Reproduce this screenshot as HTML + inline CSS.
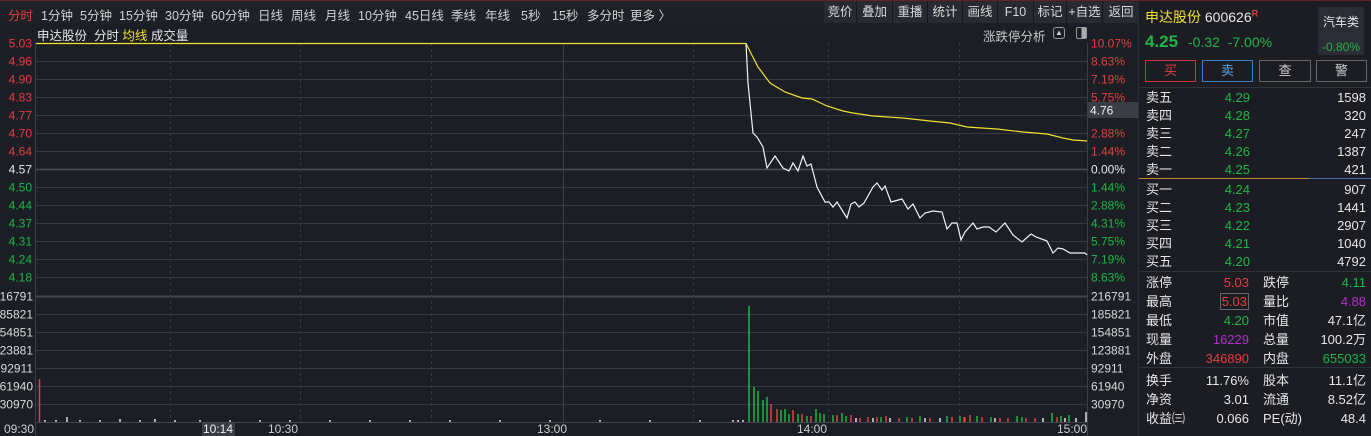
<!DOCTYPE html>
<html><head><meta charset="utf-8"><style>
*{margin:0;padding:0;box-sizing:border-box}
body{width:1371px;height:436px;overflow:hidden;background:#1c1e25;font-family:"Liberation Sans","Noto Sans CJK SC",sans-serif;font-size:12px;color:#d8d8d8;position:relative}
.a{position:absolute;white-space:nowrap}
.r{color:#e0403f}.g{color:#1fb545}.w{color:#e6e6e6}.y{color:#f0e030}.p{color:#b030c8}
</style></head><body>
<div class="a" style="left:0;top:0;width:1371px;height:1px;background:#6a1f22"></div>
<div class="a" style="left:0;top:1px;width:1140px;height:22px;background:#1f2128"></div>
<div class="a" style="top:5px;left:0;font-size:12.5px;color:#d0d0d0">
<span class="a r" style="left:8px">分时</span><span class="a" style="left:41px">1分钟</span><span class="a" style="left:80px">5分钟</span><span class="a" style="left:119px">15分钟</span><span class="a" style="left:165px">30分钟</span><span class="a" style="left:211px">60分钟</span><span class="a" style="left:258px">日线</span><span class="a" style="left:291px">周线</span><span class="a" style="left:325px">月线</span><span class="a" style="left:358px">10分钟</span><span class="a" style="left:405px">45日线</span><span class="a" style="left:451px">季线</span><span class="a" style="left:485px">年线</span><span class="a" style="left:521px">5秒</span><span class="a" style="left:552px">15秒</span><span class="a" style="left:587px">多分时</span><span class="a" style="left:630px">更多 〉</span>
</div>
<div class="a" style="left:824px;top:1px;height:22px;display:flex;font-size:12.5px;color:#d8d8d8">
<div style="width:33px;text-align:center;line-height:22px;background:#272a32;border-right:1px solid #15171c">竞价</div><div style="width:36px;text-align:center;line-height:22px;background:#272a32;border-right:1px solid #15171c">叠加</div><div style="width:35px;text-align:center;line-height:22px;background:#272a32;border-right:1px solid #15171c">重播</div><div style="width:35px;text-align:center;line-height:22px;background:#272a32;border-right:1px solid #15171c">统计</div><div style="width:35px;text-align:center;line-height:22px;background:#272a32;border-right:1px solid #15171c">画线</div><div style="width:36px;text-align:center;line-height:22px;background:#272a32;border-right:1px solid #15171c">F10</div><div style="width:33px;text-align:center;line-height:22px;background:#272a32;border-right:1px solid #15171c">标记</div><div style="width:36px;text-align:center;line-height:22px;background:#272a32;border-right:1px solid #15171c">+自选</div><div style="width:36px;text-align:center;line-height:22px;background:#272a32">返回</div>
</div>
<div class="a w" style="left:37px;top:25px;font-size:12.5px">申达股份 &nbsp;分时 <span class="y">均线</span> 成交量</div>
<div class="a" style="left:983px;top:26px;font-size:12.5px;color:#c8c8c8">涨跌停分析</div>
<div class="a" style="left:1053px;top:27px;width:12px;height:12px;border:1px solid #999;border-radius:3px;font-size:8px;text-align:center;line-height:10px;color:#ccc">▲</div>
<div class="a" style="left:1076px;top:27px;width:11px;height:12px;border:1px solid #999;border-radius:2px;background:linear-gradient(90deg,transparent 50%,#aaa 50%)"></div>

<svg class="a" style="left:0;top:0" width="1140" height="436">
<g stroke="#363a44" stroke-width="1">
<line x1="36" x2="1087" y1="61.5" y2="61.5"/><line x1="36" x2="1087" y1="79.5" y2="79.5"/><line x1="36" x2="1087" y1="97.5" y2="97.5"/><line x1="36" x2="1087" y1="115.5" y2="115.5"/><line x1="36" x2="1087" y1="133.5" y2="133.5"/><line x1="36" x2="1087" y1="151.5" y2="151.5"/><line x1="36" x2="1087" y1="187.5" y2="187.5"/><line x1="36" x2="1087" y1="205.5" y2="205.5"/><line x1="36" x2="1087" y1="223.5" y2="223.5"/><line x1="36" x2="1087" y1="241.5" y2="241.5"/><line x1="36" x2="1087" y1="259.5" y2="259.5"/><line x1="36" x2="1087" y1="277.5" y2="277.5"/>
<line x1="36" x2="1087" y1="314.5" y2="314.5"/><line x1="36" x2="1087" y1="332.5" y2="332.5"/><line x1="36" x2="1087" y1="350.5" y2="350.5"/><line x1="36" x2="1087" y1="368.5" y2="368.5"/><line x1="36" x2="1087" y1="386.5" y2="386.5"/><line x1="36" x2="1087" y1="404.5" y2="404.5"/>
</g>
<line x1="36" x2="1087" y1="169.5" y2="169.5" stroke="#4a4e5a" stroke-width="1.5"/>
<line x1="36" x2="1087" y1="296.5" y2="296.5" stroke="#424652" stroke-width="2"/>
<line x1="36" x2="1087" y1="422.5" y2="422.5" stroke="#424652"/>
<g stroke="#363a44" stroke-dasharray="3,3"><line x1="170.5" x2="170.5" y1="43" y2="422"/><line x1="300.5" x2="300.5" y1="43" y2="422"/><line x1="431.5" x2="431.5" y1="43" y2="422"/><line x1="693.5" x2="693.5" y1="43" y2="422"/><line x1="828.5" x2="828.5" y1="43" y2="422"/><line x1="959.5" x2="959.5" y1="43" y2="422"/></g>
<line x1="563.5" x2="563.5" y1="43" y2="422" stroke="#3a3e48"/>
<line x1="35.5" x2="35.5" y1="43" y2="436" stroke="#3a3e48"/>
<line x1="1087.5" x2="1087.5" y1="43" y2="436" stroke="#3a3e48"/>
<line x1="1138.5" x2="1138.5" y1="23" y2="436" stroke="#2c2f37"/>
<polyline fill="none" stroke="#f0e030" stroke-width="1.2" points="36,43.5 746,43.5 758,67 770,83 785,92 802,98 812,99 827,106 843,111 853,113 873,116 903,118 930,121 950,123 967,127 997,129 1023,132 1047,134 1063,138 1073,140 1087,141"/>
<polyline fill="none" stroke="#f2f2f2" stroke-width="1.2" points="746,43.5 748,83 753,133 757,137 763,147 767,168 775,156 783,168 789,171 793,163 798,171 803,156 807,166 811,164 817,187 825,202 829,202 833,207 837,202 847,218 851,204 855,202 859,207 864,203 873,187 877,183 882,190 885,186 891,202 902,199 908,209 913,204 920,218 925,213 933,211 942,212 947,229 952,223 957,223 961,240 965,232 973,223 977,229 983,227 989,227 996,232 1005,223 1013,235 1022,242 1031,234 1036,237 1047,241 1053,253 1058,248 1063,249 1070,253 1085,253 1087,255"/>
<g stroke-width="1.5">
<line x1="39.5" x2="39.5" y1="379" y2="422" stroke="#e0403f"/>
<g stroke="#ddd"><line x1="45" x2="45" y1="420" y2="422"/><line x1="56" x2="56" y1="420" y2="422"/><line x1="67" x2="67" y1="417" y2="422"/><line x1="80" x2="80" y1="420" y2="422"/><line x1="100" x2="100" y1="420" y2="422"/><line x1="120" x2="120" y1="419" y2="422"/><line x1="140" x2="140" y1="420" y2="422"/><line x1="155" x2="155" y1="419" y2="422"/><line x1="175" x2="175" y1="420" y2="422"/><line x1="200" x2="200" y1="420" y2="422"/><line x1="230" x2="230" y1="420" y2="422"/><line x1="260" x2="260" y1="420" y2="422"/><line x1="290" x2="290" y1="420" y2="422"/><line x1="330" x2="330" y1="420" y2="422"/><line x1="370" x2="370" y1="420" y2="422"/><line x1="410" x2="410" y1="420" y2="422"/><line x1="450" x2="450" y1="420" y2="422"/><line x1="500" x2="500" y1="420" y2="422"/><line x1="550" x2="550" y1="420" y2="422"/><line x1="600" x2="600" y1="420" y2="422"/><line x1="650" x2="650" y1="420" y2="422"/><line x1="700" x2="700" y1="420" y2="422"/><line x1="733" x2="733" y1="420" y2="422"/><line x1="738" x2="738" y1="420" y2="422"/><line x1="743" x2="743" y1="420" y2="422"/></g>
<g stroke="#1fb545"><line x1="749" x2="749" y1="306" y2="422"/><line x1="754" x2="754" y1="387" y2="422"/><line x1="758" x2="758" y1="391" y2="422"/><line x1="763" x2="763" y1="400" y2="422"/><line x1="767" x2="767" y1="397" y2="422"/><line x1="781" x2="781" y1="410" y2="422"/><line x1="785" x2="785" y1="409" y2="422"/><line x1="789" x2="789" y1="414" y2="422"/><line x1="798" x2="798" y1="414" y2="422"/><line x1="807" x2="807" y1="416" y2="422"/><line x1="816" x2="816" y1="409" y2="422"/><line x1="820" x2="820" y1="413" y2="422"/><line x1="824" x2="824" y1="414" y2="422"/><line x1="833" x2="833" y1="415" y2="422"/><line x1="842" x2="842" y1="413" y2="422"/><line x1="846" x2="846" y1="416" y2="422"/><line x1="881" x2="881" y1="417" y2="422"/><line x1="907" x2="907" y1="417" y2="422"/><line x1="920" x2="920" y1="416" y2="422"/><line x1="947" x2="947" y1="416" y2="422"/><line x1="960" x2="960" y1="416" y2="422"/><line x1="977" x2="977" y1="416" y2="422"/><line x1="991" x2="991" y1="417" y2="422"/><line x1="1017" x2="1017" y1="416" y2="422"/><line x1="1022" x2="1022" y1="417" y2="422"/><line x1="1052" x2="1052" y1="413" y2="422"/><line x1="1061" x2="1061" y1="416" y2="422"/><line x1="1069" x2="1069" y1="415" y2="422"/></g>
<g stroke="#e0403f"><line x1="771" x2="771" y1="404" y2="422"/><line x1="777" x2="777" y1="409" y2="422"/><line x1="793" x2="793" y1="410" y2="422"/><line x1="802" x2="802" y1="414" y2="422"/><line x1="811" x2="811" y1="416" y2="422"/><line x1="837" x2="837" y1="415" y2="422"/><line x1="851" x2="851" y1="415" y2="422"/><line x1="860" x2="860" y1="418" y2="422"/><line x1="868" x2="868" y1="417" y2="422"/><line x1="877" x2="877" y1="417" y2="422"/><line x1="886" x2="886" y1="416" y2="422"/><line x1="899" x2="899" y1="418" y2="422"/><line x1="912" x2="912" y1="418" y2="422"/><line x1="930" x2="930" y1="418" y2="422"/><line x1="952" x2="952" y1="417" y2="422"/><line x1="964" x2="964" y1="417" y2="422"/><line x1="965" x2="965" y1="417" y2="422"/><line x1="970" x2="970" y1="415" y2="422"/><line x1="982" x2="982" y1="417" y2="422"/><line x1="1000" x2="1000" y1="418" y2="422"/><line x1="1008" x2="1008" y1="418" y2="422"/><line x1="1026" x2="1026" y1="418" y2="422"/><line x1="1035" x2="1035" y1="418" y2="422"/><line x1="1057" x2="1057" y1="417" y2="422"/></g>
<g stroke="#ddd"><line x1="856" x2="856" y1="418" y2="422"/><line x1="873" x2="873" y1="418" y2="422"/><line x1="890" x2="890" y1="418" y2="422"/><line x1="925" x2="925" y1="418" y2="422"/><line x1="940" x2="940" y1="418" y2="422"/><line x1="995" x2="995" y1="418" y2="422"/><line x1="1043" x2="1043" y1="418" y2="422"/><line x1="1065" x2="1065" y1="418" y2="422"/><line x1="1076" x2="1076" y1="418" y2="422"/><line x1="1086" x2="1086" y1="412" y2="422"/></g>
</g>
<g font-family="Liberation Sans,sans-serif" font-size="12" text-anchor="end">
<text x="32" y="47.5" fill="#e0403f">5.03</text><text x="32" y="65.5" fill="#e0403f">4.96</text><text x="32" y="83.5" fill="#e0403f">4.90</text><text x="32" y="101.5" fill="#e0403f">4.83</text><text x="32" y="119.5" fill="#e0403f">4.77</text><text x="32" y="137.5" fill="#e0403f">4.70</text><text x="32" y="155.5" fill="#e0403f">4.64</text><text x="32" y="173.5" fill="#e6e6e6">4.57</text><text x="32" y="191.5" fill="#1fb545">4.50</text><text x="32" y="209.5" fill="#1fb545">4.44</text><text x="32" y="227.5" fill="#1fb545">4.37</text><text x="32" y="245.5" fill="#1fb545">4.31</text><text x="32" y="263.5" fill="#1fb545">4.24</text><text x="32" y="281.5" fill="#1fb545">4.18</text>
<g fill="#d8d8d8"><text x="33" y="300.5">216791</text><text x="33" y="318.5">185821</text><text x="33" y="336.5">154851</text><text x="33" y="354.5">123881</text><text x="33" y="372.5">92911</text><text x="33" y="390.5">61940</text><text x="33" y="408.5">30970</text></g>
</g>
<g font-family="Liberation Sans,sans-serif" font-size="12">
<g fill="#e0403f"><text x="1091" y="47.5">10.07%</text><text x="1091" y="65.5">8.63%</text><text x="1091" y="83.5">7.19%</text><text x="1091" y="101.5">5.75%</text><text x="1091" y="137.5">2.88%</text><text x="1091" y="155.5">1.44%</text></g>
<text x="1091" y="173.5" fill="#e6e6e6">0.00%</text>
<g fill="#1fb545"><text x="1091" y="191.5">1.44%</text><text x="1091" y="209.5">2.88%</text><text x="1091" y="227.5">4.31%</text><text x="1091" y="245.5">5.75%</text><text x="1091" y="263.5">7.19%</text><text x="1091" y="281.5">8.63%</text></g>
<g fill="#d8d8d8"><text x="1091" y="300.5">216791</text><text x="1091" y="318.5">185821</text><text x="1091" y="336.5">154851</text><text x="1091" y="354.5">123881</text><text x="1091" y="372.5">92911</text><text x="1091" y="390.5">61940</text><text x="1091" y="408.5">30970</text></g>
<rect x="1088" y="102" width="50" height="16" fill="#3a3d46"/>
<text x="1090" y="114.5" fill="#f0f0f0">4.76</text>
<g fill="#cfcfcf"><text x="4" y="433">09:30</text><text x="268" y="433">10:30</text><text x="537" y="433">13:00</text><text x="797" y="433">14:00</text><text x="1057" y="433">15:00</text></g>
<rect x="202" y="423" width="33" height="13" fill="#3a3d46"/>
<text x="203" y="433" fill="#f0f0f0">10:14</text>
</g>
</svg>

<div class="a" style="left:1139px;top:1px;width:232px;height:435px;background:#1b1d23"></div>
<div class="a y" style="left:1145px;top:7px;font-size:14px">申达股份 <span class="w">600626</span><sup class="r" style="font-size:9px;font-weight:bold">R</sup></div>
<div class="a" style="left:1318px;top:7px;width:46px;height:48px;background:#2a2d35;text-align:center">
<div class="w" style="font-size:12px;margin-top:6px">汽车类</div><div class="g" style="font-size:12px;margin-top:10px">-0.80%</div></div>
<div class="a g" style="left:1145px;top:32px;font-size:17px;font-weight:bold">4.25</div>
<div class="a g" style="left:1188px;top:34px;font-size:14px">-0.32 &nbsp;-7.00%</div>
<div class="a" style="left:1145px;top:60px;width:51px;height:22px;border:1px solid #c8383a;color:#e0403f;text-align:center;line-height:20px;font-size:13px">买</div>
<div class="a" style="left:1202px;top:60px;width:51px;height:22px;border:1px solid #3a7fc0;color:#5aa0e0;text-align:center;line-height:20px;font-size:13px">卖</div>
<div class="a" style="left:1259px;top:60px;width:52px;height:22px;border:1px solid #666;color:#ccc;text-align:center;line-height:20px;font-size:13px">查</div>
<div class="a" style="left:1316px;top:60px;width:51px;height:22px;border:1px solid #666;color:#ccc;text-align:center;line-height:20px;font-size:13px">警</div>
<div class="a" style="left:1139px;top:87px;width:232px;height:1px;background:#30333b"></div>
<div class="a" style="left:1146px;top:89px;width:220px;font-size:13px;line-height:18px">
<div style="display:flex"><span class="w" style="width:50px">卖五</span><span class="g" style="width:54px;text-align:right">4.29</span><span class="w" style="flex:1;text-align:right">1598</span></div>
<div style="display:flex"><span class="w" style="width:50px">卖四</span><span class="g" style="width:54px;text-align:right">4.28</span><span class="w" style="flex:1;text-align:right">320</span></div>
<div style="display:flex"><span class="w" style="width:50px">卖三</span><span class="g" style="width:54px;text-align:right">4.27</span><span class="w" style="flex:1;text-align:right">247</span></div>
<div style="display:flex"><span class="w" style="width:50px">卖二</span><span class="g" style="width:54px;text-align:right">4.26</span><span class="w" style="flex:1;text-align:right">1387</span></div>
<div style="display:flex"><span class="w" style="width:50px">卖一</span><span class="g" style="width:54px;text-align:right">4.25</span><span class="w" style="flex:1;text-align:right">421</span></div>
<div style="height:2px"></div>
<div style="display:flex"><span class="w" style="width:50px">买一</span><span class="g" style="width:54px;text-align:right">4.24</span><span class="w" style="flex:1;text-align:right">907</span></div>
<div style="display:flex"><span class="w" style="width:50px">买二</span><span class="g" style="width:54px;text-align:right">4.23</span><span class="w" style="flex:1;text-align:right">1441</span></div>
<div style="display:flex"><span class="w" style="width:50px">买三</span><span class="g" style="width:54px;text-align:right">4.22</span><span class="w" style="flex:1;text-align:right">2907</span></div>
<div style="display:flex"><span class="w" style="width:50px">买四</span><span class="g" style="width:54px;text-align:right">4.21</span><span class="w" style="flex:1;text-align:right">1040</span></div>
<div style="display:flex"><span class="w" style="width:50px">买五</span><span class="g" style="width:54px;text-align:right">4.20</span><span class="w" style="flex:1;text-align:right">4792</span></div>
</div>
<div class="a" style="left:1139px;top:178px;width:170px;height:1px;background:#c08a30"></div>
<div class="a" style="left:1309px;top:178px;width:62px;height:1px;background:#3a70a8"></div>
<div class="a" style="left:1139px;top:271px;width:232px;height:1px;background:#30333b"></div>
<div class="a" style="left:1139px;top:367px;width:232px;height:1px;background:#30333b"></div>
<div class="a" style="left:1146px;top:273px;width:220px;font-size:13px;line-height:19px">
<div style="display:flex"><span class="w" style="width:50px">涨停</span><span class="r" style="width:53px;text-align:right">5.03</span><span class="w" style="width:65px;padding-left:14px">跌停</span><span class="g" style="flex:1;text-align:right">4.11</span></div>
<div style="display:flex"><span class="w" style="width:50px">最高</span><span style="width:53px;text-align:right"><span class="r" style="border:1px solid #666;padding:0 1px">5.03</span></span><span class="w" style="width:65px;padding-left:14px">量比</span><span class="p" style="flex:1;text-align:right">4.88</span></div>
<div style="display:flex"><span class="w" style="width:50px">最低</span><span class="g" style="width:53px;text-align:right">4.20</span><span class="w" style="width:65px;padding-left:14px">市值</span><span class="w" style="flex:1;text-align:right">47.1亿</span></div>
<div style="display:flex"><span class="w" style="width:50px">现量</span><span class="p" style="width:53px;text-align:right">16229</span><span class="w" style="width:65px;padding-left:14px">总量</span><span class="w" style="flex:1;text-align:right">100.2万</span></div>
<div style="display:flex"><span class="w" style="width:50px">外盘</span><span class="r" style="width:53px;text-align:right">346890</span><span class="w" style="width:65px;padding-left:14px">内盘</span><span class="g" style="flex:1;text-align:right">655033</span></div>
<div style="height:3px"></div>
<div style="display:flex"><span class="w" style="width:50px">换手</span><span class="w" style="width:53px;text-align:right">11.76%</span><span class="w" style="width:65px;padding-left:14px">股本</span><span class="w" style="flex:1;text-align:right">11.1亿</span></div>
<div style="display:flex"><span class="w" style="width:50px">净资</span><span class="w" style="width:53px;text-align:right">3.01</span><span class="w" style="width:65px;padding-left:14px">流通</span><span class="w" style="flex:1;text-align:right">8.52亿</span></div>
<div style="display:flex"><span class="w" style="width:50px">收益㈢</span><span class="w" style="width:53px;text-align:right">0.066</span><span class="w" style="width:65px;padding-left:14px">PE(动)</span><span class="w" style="flex:1;text-align:right">48.4</span></div>
</div>
</body></html>
